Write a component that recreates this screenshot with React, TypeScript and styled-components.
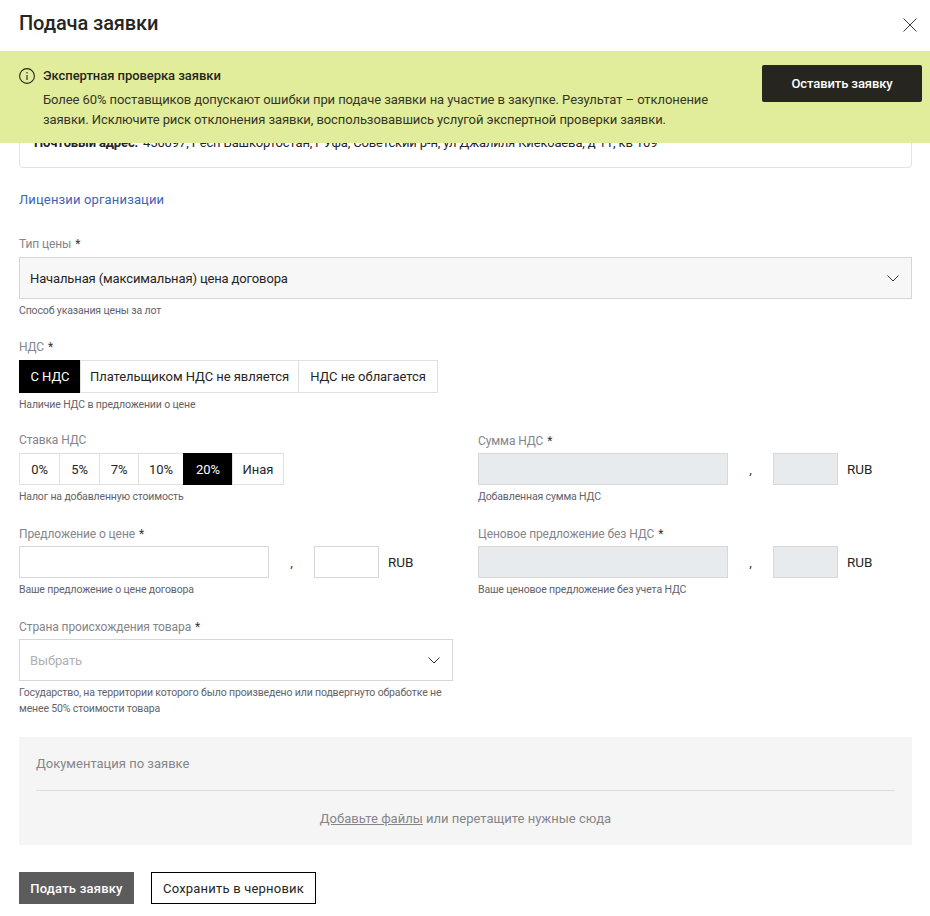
import React from "react";
import styled, { createGlobalStyle } from "styled-components";

const Global = createGlobalStyle`
  html, body { margin: 0; padding: 0; background: #fff; }
  body { font-family: Roboto, "Liberation Sans", sans-serif; color: #26251f; overflow: hidden; }
  * { box-sizing: border-box; }
`;

const Modal = styled.div`
  position: relative;
  width: 930px;
  height: 916px;
  overflow: hidden;
  background: #fff;
`;

const Header = styled.header`
  height: 51px;
  padding: 0 12px 2px 19px;
  display: flex;
  align-items: center;
  justify-content: space-between;
`;

const Title = styled.h1`
  margin: 0 0 4px;
  font-size: 20px;
  line-height: 26px;
  font-weight: 500;
  color: #26251f;
  letter-spacing: -0.1px;
`;

const CloseButton = styled.button`
  width: 16px;
  height: 16px;
  padding: 0;
  border: 0;
  background: none;
  display: flex;
  color: #3a3a3a;
`;

const Banner = styled.aside`
  position: absolute;
  top: 51px;
  left: 0;
  right: 0;
  height: 92px;
  background: #e2ed9b;
  border-top: 1px solid #dfe3c0;
  padding: 13px 8px 0 19px;
  display: flex;
  justify-content: space-between;
  align-items: flex-start;
`;

const BannerBody = styled.div`
  display: grid;
  grid-template-columns: 16px 1fr;
  column-gap: 8px;
  width: 700px;
`;

const BannerIcon = styled.svg`
  width: 16px;
  height: 16px;
  margin-top: 3px;
  color: #26251f;
`;

const BannerTitle = styled.div`
  font-size: 13px;
  line-height: 22px;
  font-weight: 500;
  color: #26251f;
  letter-spacing: -0.05px;
`;

const BannerText = styled.p`
  grid-column: 2;
  margin: 3px 0 0;
  font-size: 13px;
  line-height: 20px;
  color: #35352a;
  letter-spacing: -0.08px;
`;

const BannerButton = styled.button`
  width: 160px;
  height: 37px;
  margin-top: 0;
  border: 0;
  border-radius: 2px;
  background: #26251f;
  color: #fff;
  font: 500 13px Roboto, sans-serif;
  letter-spacing: -0.1px;
`;

const Content = styled.main`
  padding: 0 18px 0 19px;
  display: flex;
  flex-direction: column;
`;

const AddressCard = styled.section`
  height: 117px;
  border: 1px solid #e3e3e3;
  border-radius: 4px;
  padding: 0 14px 14px;
  display: flex;
  align-items: flex-end;
  font-size: 13px;
  line-height: 20px;
  gap: 5px;
  letter-spacing: -0.13px;
`;

const Strong = styled.b`
  font-weight: 700;
`;

const LicenseLink = styled.a`
  margin-top: 23px;
  font-size: 13px;
  line-height: 18px;
  color: #3f63b5;
  letter-spacing: 0.15px;
`;

const Field = styled.div<{ $top?: number }>`
  margin-top: ${(p) => p.$top ?? 0}px;
  display: flex;
  flex-direction: column;
  align-items: flex-start;
`;

const Label = styled.label`
  display: block;
  font-size: 12px;
  line-height: 14px;
  color: #85858a;
  height: 14px;
  letter-spacing: -0.1px;
`;

const Star = styled.span`
  color: #333;
  margin-left: 4px;
`;

const Hint = styled.div`
  margin-top: 4px;
  font-size: 10.5px;
  line-height: 16px;
  color: #62626a;
  letter-spacing: -0.14px;
`;

const Select = styled.div<{ $filled?: boolean; $gap?: number }>`
  width: 100%;
  height: 42px;
  margin-top: ${(p) => p.$gap ?? 6}px;
  padding: 0 12px 0 10px;
  border: 1px solid #d6d6d6;
  background: ${(p) => (p.$filled ? "#f7f7f7" : "#fff")};
  color: ${(p) => (p.$filled ? "#26251f" : "#b0b0b0")};
  font-size: 13px;
  letter-spacing: -0.13px;
  display: flex;
  align-items: center;
  justify-content: space-between;
`;

const Chevron = styled.svg`
  width: 12px;
  height: 7px;
  color: #333;
`;

const Segments = styled.div<{ $height: number }>`
  display: flex;
  height: ${(p) => p.$height}px;
  margin-top: 6px;
`;

const Segment = styled.div<{ $active?: boolean; $w: number }>`
  width: ${(p) => p.$w}px;
  margin-left: -1px;
  &:first-child { margin-left: 0; }
  display: flex;
  align-items: center;
  justify-content: center;
  font-size: 13px;
  letter-spacing: -0.05px;
  border: 1px solid ${(p) => (p.$active ? "#000" : "#e0e0e0")};
  background: ${(p) => (p.$active ? "#000" : "#fff")};
  color: ${(p) => (p.$active ? "#fff" : "#26251f")};
`;

const Columns = styled.div`
  margin-top: 20px;
  display: grid;
  grid-template-columns: 434px 434px;
  column-gap: 25px;
  row-gap: 21px;
`;

const AmountField = styled.div`
  padding-top: 1px;
`;

const AmountRow = styled.div`
  display: flex;
  align-items: center;
  margin-top: 5px;
  height: 32px;
`;

const AmountInput = styled.div<{ $w: number; $disabled?: boolean }>`
  width: ${(p) => p.$w}px;
  height: 32px;
  border: 1px solid #d8d8d8;
  background: ${(p) => (p.$disabled ? "#e8ebed" : "#fff")};
`;

const Comma = styled.span`
  width: 45px;
  text-align: center;
  font-size: 13px;
  color: #333;
`;

const Currency = styled.span`
  margin-left: 9px;
  font-size: 13.5px;
  color: #26251f;
`;

const Docs = styled.section`
  margin-top: 20px;
  height: 108px;
  background: #f5f5f5;
  padding: 0 17px;
`;

const DocsTitle = styled.div`
  height: 54px;
  padding-top: 19px;
  font-size: 13px;
  line-height: 16px;
  color: #85858a;
  border-bottom: 1px solid #dedede;
`;

const DropText = styled.div`
  margin-top: 20px;
  text-align: center;
  font-size: 13px;
  line-height: 16px;
  color: #85858a;
`;

const DropLink = styled.span`
  text-decoration: underline;
`;

const Actions = styled.div`
  margin-top: 27px;
  display: flex;
  gap: 17px;
`;

const ActionButton = styled.button<{ $primary?: boolean }>`
  height: 32px;
  width: ${(p) => (p.$primary ? 115 : 165)}px;
  padding: 0;
  border: 1px solid ${(p) => (p.$primary ? "#5c5c5c" : "#000")};
  background: ${(p) => (p.$primary ? "#5c5c5c" : "#fff")};
  color: ${(p) => (p.$primary ? "#fff" : "#26251f")};
  font: ${(p) => (p.$primary ? 500 : 400)} 13px Roboto, sans-serif;
  letter-spacing: 0.2px;
`;

const ChevronIcon = () => (
  <Chevron viewBox="0 0 12 7" fill="none" stroke="currentColor" strokeWidth="1">
    <path d="M0.5 0.5 6 6l5.5-5.5" />
  </Chevron>
);

const Amount = ({ label, hint, disabled }: { label: string; hint: string; disabled?: boolean }) => (
  <AmountField>
    <Label>
      {label}
      <Star>*</Star>
    </Label>
    <AmountRow>
      <AmountInput $w={250} $disabled={disabled} />
      <Comma>,</Comma>
      <AmountInput $w={65} $disabled={disabled} />
      <Currency>RUB</Currency>
    </AmountRow>
    <Hint>{hint}</Hint>
  </AmountField>
);

export default function App() {
  return (
    <Modal>
      <Global />
      <Header>
        <Title>Подача заявки</Title>
        <CloseButton aria-label="Закрыть">
          <svg width="16" height="16" viewBox="0 0 16 16" fill="none" stroke="currentColor" strokeWidth="1">
            <path d="M1.5 1.5l13 13M14.5 1.5l-13 13" />
          </svg>
        </CloseButton>
      </Header>
      <Content>
        <AddressCard>
          <Strong>Почтовый адрес:</Strong>
          <span>450097, Респ Башкортостан, г Уфа, Советский р-н, ул Джалиля Киекбаева, д 11, кв 109</span>
        </AddressCard>
        <LicenseLink>Лицензии организации</LicenseLink>

        <Field $top={28}>
          <Label>
            Тип цены<Star>*</Star>
          </Label>
          <Select $filled>
            Начальная (максимальная) цена договора
            <ChevronIcon />
          </Select>
          <Hint>Способ указания цены за лот</Hint>
        </Field>

        <Field $top={21}>
          <Label>
            НДС<Star>*</Star>
          </Label>
          <Segments $height={33}>
            <Segment $active $w={62}>С НДС</Segment>
            <Segment $w={219}>Плательщиком НДС не является</Segment>
            <Segment $w={140}>НДС не облагается</Segment>
          </Segments>
          <Hint>Наличие НДС в предложении о цене</Hint>
        </Field>

        <Columns>
          <Field>
            <Label>Ставка НДС</Label>
            <Segments $height={32}>
              <Segment $w={41}>0%</Segment>
              <Segment $w={41}>5%</Segment>
              <Segment $w={40}>7%</Segment>
              <Segment $w={46}>10%</Segment>
              <Segment $active $w={50}>20%</Segment>
              <Segment $w={52}>Иная</Segment>
            </Segments>
            <Hint>Налог на добавленную стоимость</Hint>
          </Field>
          <Amount label="Сумма НДС" hint="Добавленная сумма НДС" disabled />
          <Amount label="Предложение о цене" hint="Ваше предложение о цене договора" />
          <Amount label="Ценовое предложение без НДС" hint="Ваше ценовое предложение без учета НДС" disabled />
          <Field $top={1}>
            <Label>
              Страна происхождения товара<Star>*</Star>
            </Label>
            <Select $gap={5}>
              Выбрать
              <ChevronIcon />
            </Select>
            <Hint>
              Государство, на территории которого было произведено или подвергнуто обработке не менее 50% стоимости
              товара
            </Hint>
          </Field>
        </Columns>

        <Docs>
          <DocsTitle>Документация по заявке</DocsTitle>
          <DropText>
            <DropLink>Добавьте файлы</DropLink> или перетащите нужные сюда
          </DropText>
        </Docs>

        <Actions>
          <ActionButton $primary>Подать заявку</ActionButton>
          <ActionButton>Сохранить в черновик</ActionButton>
        </Actions>
      </Content>

      <Banner>
        <BannerBody>
          <BannerIcon viewBox="0 0 16 16" fill="none" stroke="currentColor" strokeWidth="1.1">
            <circle cx="8" cy="8" r="7.4" />
            <path d="M8 7v5M8 4v1.4" />
          </BannerIcon>
          <BannerTitle>Экспертная проверка заявки</BannerTitle>
          <BannerText>
            Более 60% поставщиков допускают ошибки при подаче заявки на участие в закупке. Результат – отклонение
            заявки. Исключите риск отклонения заявки, воспользовавшись услугой экспертной проверки заявки.
          </BannerText>
        </BannerBody>
        <BannerButton>Оставить заявку</BannerButton>
      </Banner>
    </Modal>
  );
}
